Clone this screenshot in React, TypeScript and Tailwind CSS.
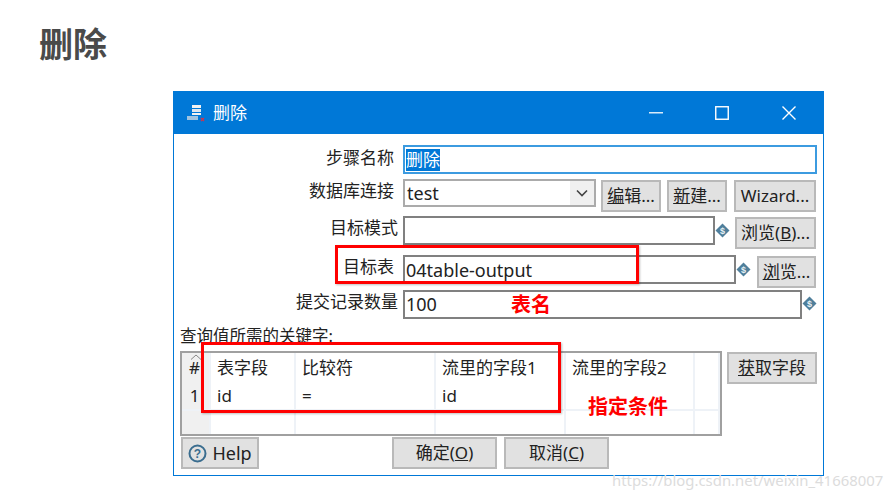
const font = { fontFamily: '"Noto Sans", "Noto Sans CJK SC", sans-serif' };

function Btn({ w, h = "h-8", children, className = "" }: { w: string; h?: string; children: React.ReactNode; className?: string }) {
  return (
    <div className={`${w} ${h} ${className} flex shrink-0 items-center justify-center border-2 border-[#b9b9b9] bg-[#e1e1e1] text-[17px] text-[#222]`}>
      {children}
    </div>
  );
}

function Dollar() {
  return (
    <svg width="15" height="15" viewBox="0 0 15 15" className="shrink-0">
      <path d="M7.5 0.5 14.5 7.5 7.5 14.5 0.5 7.5Z" fill="#4f7f9b" />
      <text x="7.5" y="11" fontSize="9" fontWeight="700" textAnchor="middle" fill="#e8f0f5" fontFamily="Liberation Sans">$</text>
    </svg>
  );
}

function Label({ w, children, className = "" }: { w: string; children: React.ReactNode; className?: string }) {
  return <div className={`${w} ${className} shrink-0 text-right text-[17px] leading-[24px] text-[#222]`}>{children}</div>;
}

function Field({ w, children, className = "" }: { w: string; children?: React.ReactNode; className?: string }) {
  return (
    <div className={`${w} ${className} flex h-[29px] shrink-0 items-center border-2 border-[#808080] bg-white pl-[1px] text-[18px] text-[#222]`}>
      {children}
    </div>
  );
}

const colClass = ["w-[29px]", "w-[85px]", "w-[140px]", "w-[130px]", "w-[129px]", "flex-1"];

function TableRow({ cells, className, line }: { cells: string[]; className: string; line?: boolean }) {
  return (
    <div className={`flex ${className}`}>
      {cells.map((c, i) => (
        <div
          key={i}
          className={`${colClass[i]} flex items-center border-r-2 border-[#eef2f7] text-[17px] text-[#222] ${i === 0 ? "justify-center bg-[#f0f0f0] pr-[2px]" : "pl-[6px]"} ${line ? "border-b-2" : ""}`}
        >
          {c}
        </div>
      ))}
    </div>
  );
}

export default function App() {
  return (
    <div className="relative h-[498px] w-[893px] overflow-hidden bg-white" style={font}>
      <h1 className="pl-[39px] pt-[19px] text-[34px] font-bold leading-[50px] text-[#4a4a4a]">删除</h1>

      <div className="ml-[173px] mt-[22px] h-[385px] w-[651px] border border-[#0078d7] border-t-0 bg-white">
        {/* title bar */}
        <div className="-mx-px flex h-[43px] items-center bg-[#0078d7] pl-[14px] text-white">
          <svg width="18" height="18" viewBox="0 0 18 18" className="shrink-0">
            <rect x="5" y="1" width="9" height="3" fill="#f2f2f2" />
            <rect x="5" y="5" width="9" height="3" fill="#dfe6ee" />
            <rect x="5" y="9" width="9" height="2" fill="#f2f2f2" />
            <rect x="0" y="12" width="11" height="4" fill="#9fc3e0" />
            <path d="M14 14 17 17M17 14 14 17" stroke="#d2334a" strokeWidth="1.3" />
          </svg>
          <span className="ml-[8px] text-[17px]">删除</span>
          <div className="ml-auto flex items-center">
            <svg width="14" height="2" className="mr-[52px]"><rect width="14" height="1.5" fill="#fff" opacity="0.85" /></svg>
            <svg width="14" height="14" className="mr-[53px]"><rect x="0.75" y="0.75" width="12.5" height="12.5" fill="none" stroke="#fff" strokeWidth="1.4" /></svg>
            <svg width="14" height="14" className="mr-[28px]"><path d="M0.5 0.5 13.5 13.5M13.5 0.5 0.5 13.5" stroke="#fff" strokeWidth="1.4" /></svg>
          </div>
        </div>

        {/* form */}
        <div className="flex flex-col pl-[6px]">
          <div className="mt-[11px] flex items-center">
            <Label w="w-[214px]" className="-translate-y-[2px]">步骤名称</Label>
            <div className="ml-[9px] flex h-[29px] w-[414px] items-center border-2 border-[#3c9be0] bg-white pl-[1px] text-[17px] text-[#222]">
              <span className="bg-[#0078d7] leading-[22px] text-white">删除</span>
            </div>
          </div>

          <div className="mt-[5px] flex items-start">
            <Label w="w-[214px]">数据库连接</Label>
            <div className="ml-[9px] flex h-[28px] w-[193px] shrink-0 items-center border-2 border-[#ababab] bg-white pl-[2px] text-[18px] text-[#222]">
              test
              <div className="ml-auto mr-0 flex h-full w-[24px] items-center justify-center bg-[#f0f0f0]">
                <svg width="12" height="8" viewBox="0 0 12 8"><path d="M1 1.5 6 6.5 11 1.5" fill="none" stroke="#444" strokeWidth="1.6" /></svg>
              </div>
            </div>
            <Btn w="w-[60px]" className="ml-[5px] mt-[1px]"><span><u>编</u>辑...</span></Btn>
            <Btn w="w-[60px]" className="ml-[6px] mt-[1px]"><span><u>新</u>建...</span></Btn>
            <Btn w="w-[82px]" className="ml-[7px] mt-[1px]">Wizard...</Btn>
          </div>

          <div className="mt-[4px] flex items-start">
            <Label w="w-[218px]">目标模式</Label>
            <Field w="w-[312px]" className="ml-[5px]" />
            <div className="ml-[0px] mt-[7px]"><Dollar /></div>
            <Btn w="w-[81px]" className="ml-[5px] mt-[1px]"><span>浏览(<u>B</u>)...</span></Btn>
          </div>

          <div className="mt-[6px] flex items-start">
            <Label w="w-[214px]">目标表</Label>
            <Field w="w-[333px]" className="ml-[9px] pt-[1px]">04table-output</Field>
            <div className="mt-[7px]"><Dollar /></div>
            <Btn w="w-[59px]" className="ml-[6px] mt-[1px]"><span><u>浏</u>览...</span></Btn>
          </div>

          <div className="mt-[2px] flex items-start">
            <Label w="w-[218px]">提交记录数量</Label>
            <Field w="w-[399px]" className="ml-[5px]">100</Field>
            <div className="mt-[6px]"><Dollar /></div>
          </div>

          <div className="mt-[5px] text-[16.5px] leading-[24px] text-[#222]">查询值所需的关键字:</div>

          <div className="mt-[3px] flex items-start">
            <div className="relative flex h-[85px] w-[542px] shrink-0 flex-col border-2 border-[#a0a0a0] bg-white">
              <TableRow className="h-[30px]" cells={["#", "表字段", "比较符", "流里的字段1", "流里的字段2", ""]} />
              <TableRow className="h-[28px]" line cells={["1", "id", "=", "id", "", ""]} />
              <TableRow className="flex-1" cells={["", "", "", "", "", ""]} />
              <svg width="12" height="6" viewBox="0 0 12 6" className="absolute left-[8px] top-[1px]"><path d="M1 5.5 6 1 11 5.5" fill="none" stroke="#888" strokeWidth="1" /></svg>
            </div>
            <Btn w="w-[90px]" className="ml-[5px] mt-[1px]"><span><u>获</u>取字段</span></Btn>
          </div>

          <div className="mt-[1px] flex items-start pl-[1px]">
            <Btn w="w-[78px]" className="gap-[5px]">
              <svg width="19" height="19" viewBox="0 0 19 19">
                <circle cx="9.5" cy="9.5" r="8" fill="none" stroke="#3a6d8f" strokeWidth="2" />
                <text x="9.5" y="14" fontSize="12" fontWeight="700" textAnchor="middle" fill="#3a6d8f" fontFamily="Liberation Sans">?</text>
              </svg>
              <span className="text-[18px]">Help</span>
            </Btn>
            <Btn w="w-[105px]" className="ml-[133px]"><span>确定(<u>O</u>)</span></Btn>
            <Btn w="w-[105px]" className="ml-[7px]"><span>取消(<u>C</u>)</span></Btn>
          </div>
        </div>
      </div>

      {/* annotations */}
      <div className="absolute left-[335px] top-[245px] h-[39px] w-[304px] border-[3px] border-[#ff0000] shadow-[1px_1px_2px_rgba(0,0,0,0.25)]" />
      <div className="absolute left-[201px] top-[342px] h-[71px] w-[360px] border-[3px] border-[#ff0000] shadow-[1px_1px_2px_rgba(0,0,0,0.25)]" />
      <div className="absolute left-[511px] top-[291px] text-[20px] font-bold leading-[28px] text-[#ff0000]">表名</div>
      <div className="absolute left-[588px] top-[393px] text-[20px] font-bold leading-[28px] text-[#ff0000]">指定条件</div>
      <div className="absolute left-[612px] top-[469px] text-[14.9px] leading-[22px] text-[#dcdcdc]">https://blog.csdn.net/weixin_41668007</div>
    </div>
  );
}
